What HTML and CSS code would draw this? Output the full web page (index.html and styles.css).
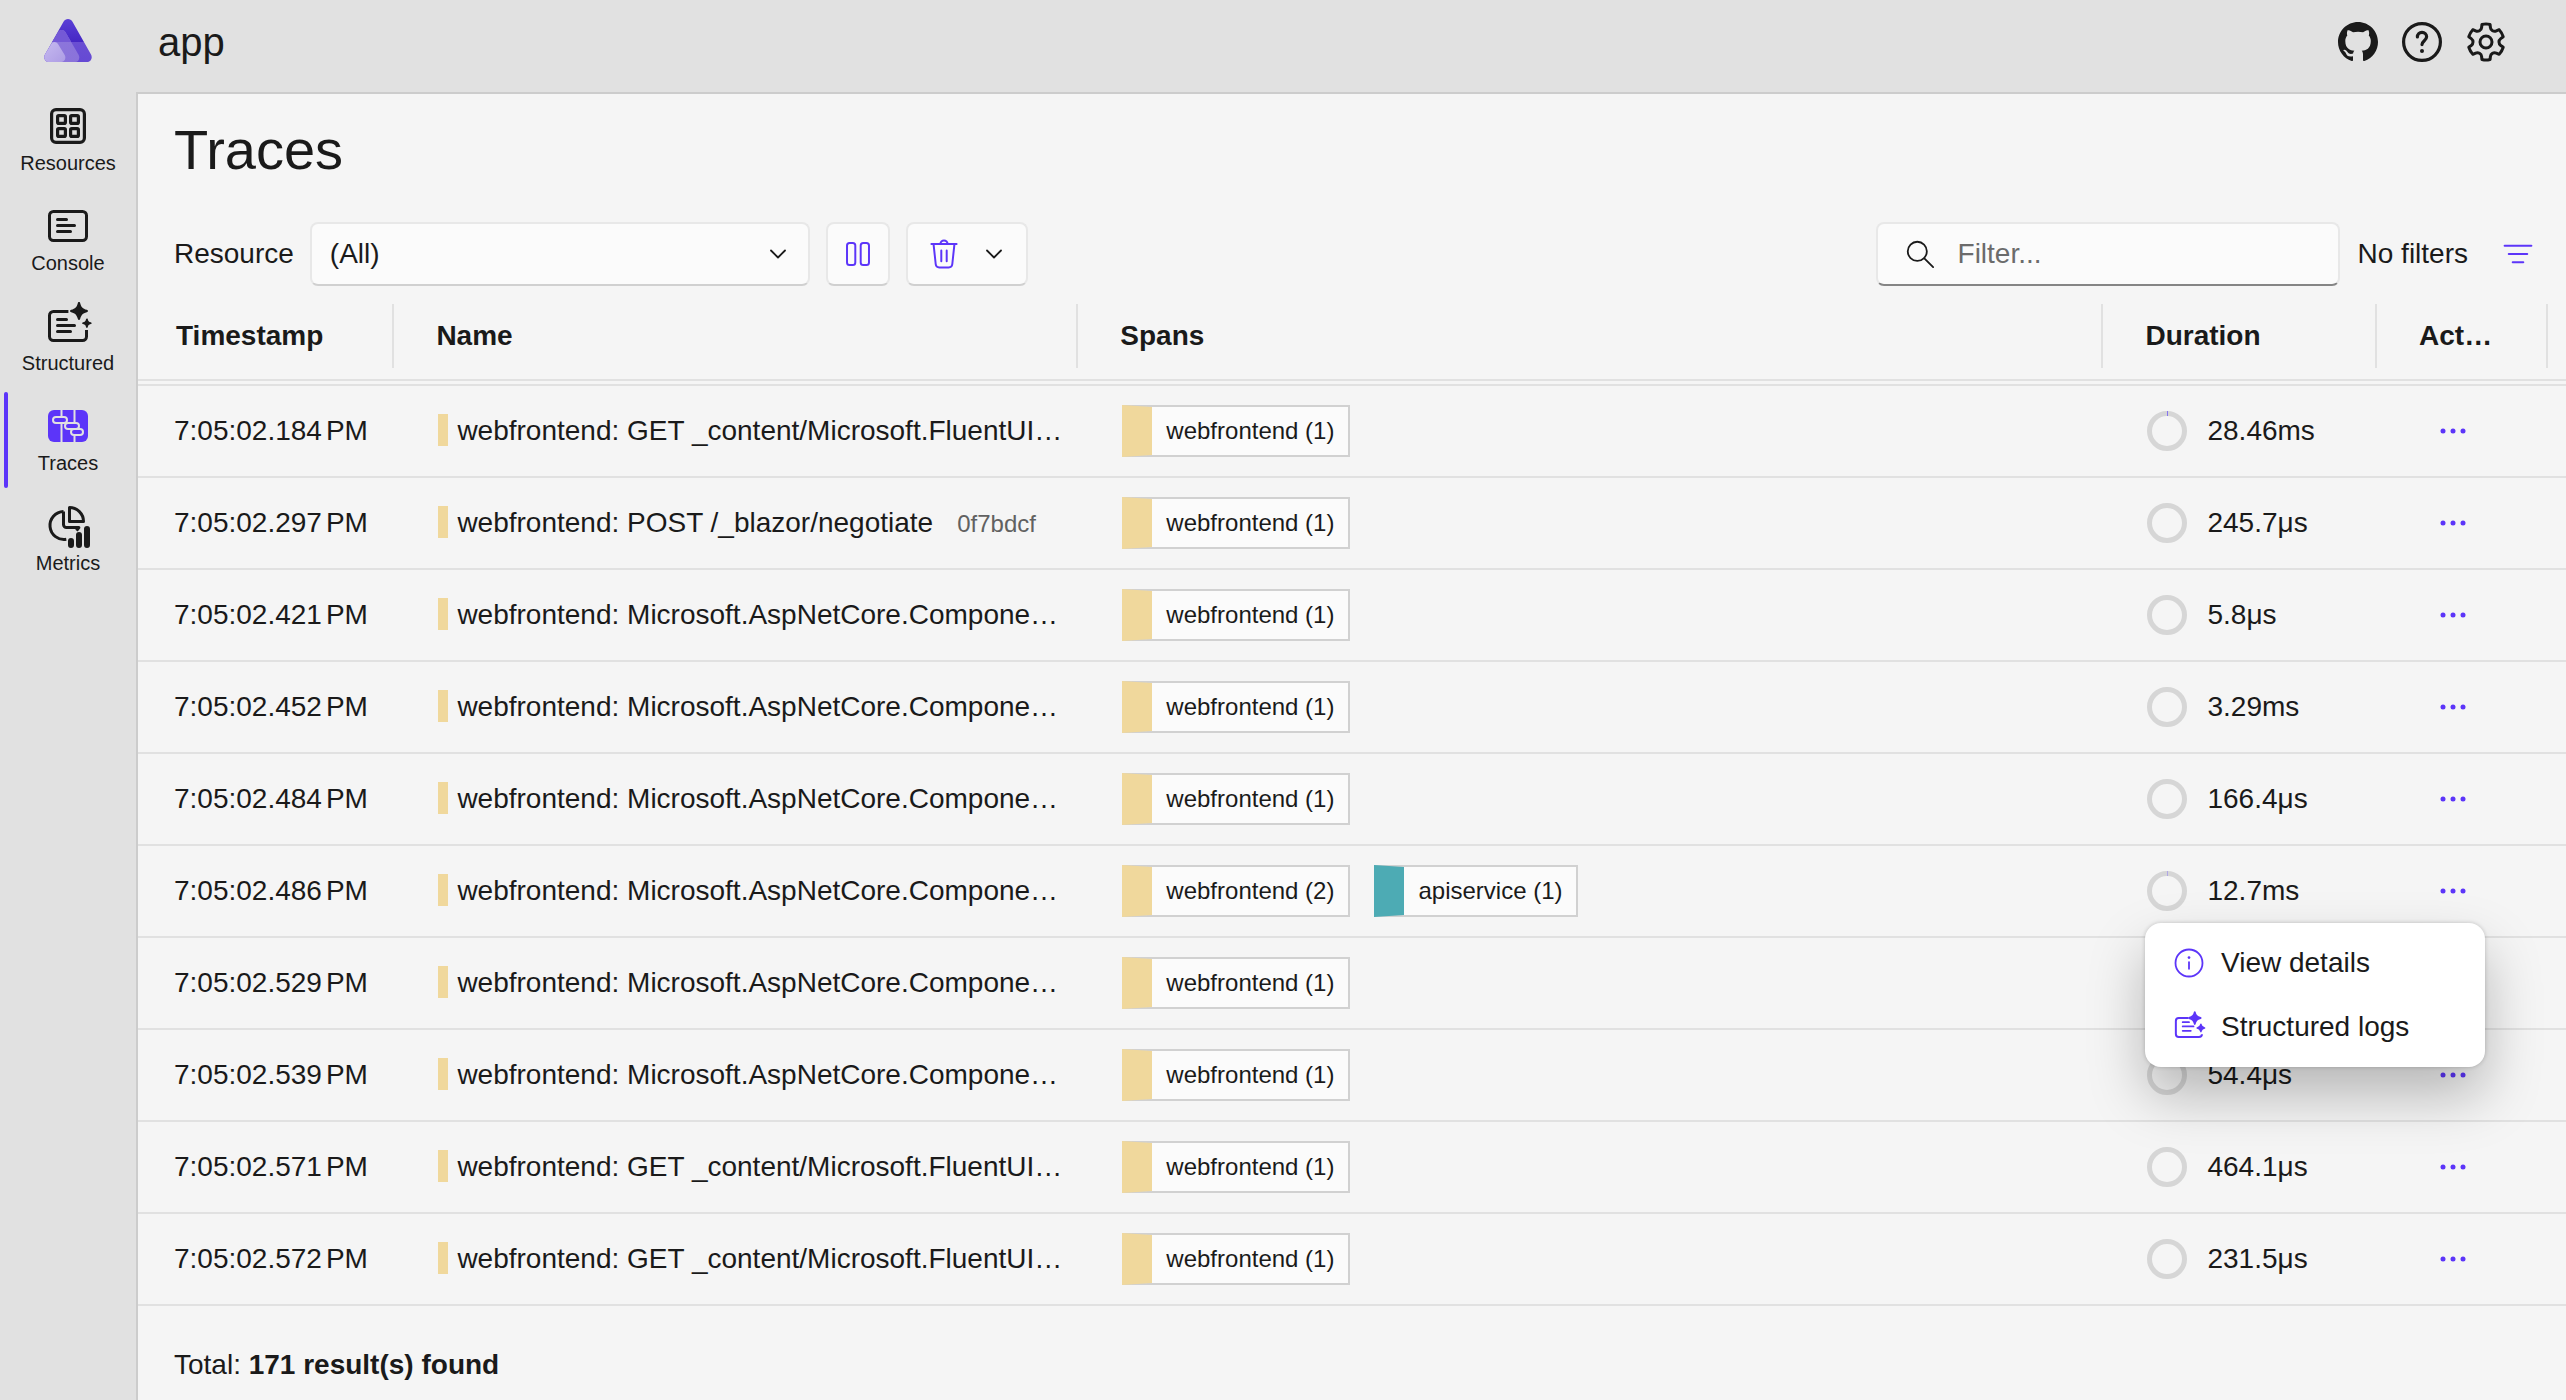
FILE: index.html
```html
<!DOCTYPE html>
<html lang="en">
<head>
<meta charset="utf-8">
<title>app traces</title>
<link rel="stylesheet" href="styles.css">
</head>
<body>
<svg class="sprite" aria-hidden="true">
  <symbol id="resources" viewBox="0 0 24 24"><g fill="none" stroke="currentColor" stroke-width="1.6"><rect x="3.8" y="3.8" width="16.4" height="16.4" rx="2.2"/><rect x="6.800" y="6.800" width="3.900" height="3.900" rx=".6"/><rect x="13.300" y="6.800" width="3.900" height="3.900" rx=".6"/><rect x="6.800" y="13.300" width="3.900" height="3.900" rx=".6"/><rect x="13.300" y="13.300" width="3.900" height="3.900" rx=".6"/></g></symbol>
  <symbol id="console" viewBox="0 0 24 24"><g fill="none" stroke="currentColor" stroke-width="1.5" stroke-linecap="round"><rect x="2.75" y="4.75" width="18.5" height="14.5" rx="2"/><path d="M6.75 8.75h4.5M6.75 11.75h8.5M6.75 14.75h6.5"/></g></symbol>
  <symbol id="structured" viewBox="0 0 24 24"><path fill="none" stroke="currentColor" stroke-width="1.5" stroke-linecap="round" d="M6.75 8.75h4.5M6.75 11.75h8.5M6.75 14.75h6.5"/><path fill="none" stroke="currentColor" stroke-width="1.5" d="M12.2 4.75H4.75a2 2 0 0 0-2 2v10.5c0 1.1.9 2 2 2h14.5a2 2 0 0 0 2-2V14"/><path fill="currentColor" d="M17.5 0c.4 0 .5.3.6.6.5 1.9 1.2 2.7 3.3 3.3.8.2.8 1 0 1.2-2.1.6-2.8 1.4-3.3 3.3-.2.8-1 .8-1.2 0-.5-1.9-1.2-2.7-3.3-3.3-.8-.2-.8-1 0-1.2 2.1-.6 2.8-1.4 3.3-3.3.1-.3.2-.6.6-.6ZM21.5 8.200c.3 0 .4.2.4.4.2 1 .5 1.300 1.500 1.500.6.2.6.8 0 .9-1 .3-1.300.6-1.500 1.500-.2.6-.7.6-.9 0-.2-.9-.5-1.200-1.500-1.500-.6-.1-.6-.7 0-.9 1-.2 1.300-.5 1.500-1.500.1-.2.2-.4.5-.4Z"/></symbol>
  <symbol id="logs" viewBox="0 0 20 20"><path fill="none" stroke="currentColor" stroke-linecap="round" d="M6.500 7.300h3.500M6.500 9.700h6M6.500 12.100h4.500"/><path fill="none" stroke="currentColor" stroke-width="1.100" d="M9.500 5H4.300A1.600 1.600 0 0 0 2.700 6.600v7.300c0 .9.700 1.600 1.600 1.600h11.200c1 0 1.700-.7 1.700-1.500"/><path fill="currentColor" d="M13.200 1.200c.3 0 .4.2.5.5.4 1.600 1 2.300 2.800 2.800.7.200.7.900 0 1.100-1.800.5-2.400 1.200-2.800 2.800-.2.700-.8.700-1 0-.4-1.600-1-2.300-2.800-2.800-.7-.2-.7-.9 0-1.100 1.800-.5 2.400-1.200 2.800-2.800.1-.3.200-.5.500-.5ZM16.600 8c.3 0 .3.200.4.400.3 1 .7 1.400 1.700 1.700.5.200.5.700 0 .9-1 .3-1.400.7-1.700 1.700-.1.500-.6.500-.8 0-.3-1-.7-1.400-1.700-1.700-.5-.2-.5-.7 0-.9 1-.3 1.400-.7 1.700-1.700.1-.2.200-.4.400-.4Z"/></symbol>
  <symbol id="traces" viewBox="0 0 24 24"><rect x="2" y="4" width="20" height="16" rx="3" fill="currentColor"/><g fill="none" stroke="#e1e1e1"><path d="M8.75 4v3.500M8.75 11v9M15.250 4v6.500M15.250 17v3"/><rect x="4.500" y="7.500" width="7" height="3" rx="1.500"/><rect x="10.500" y="10.500" width="7" height="3" rx="1.500"/><rect x="13.500" y="13.500" width="6" height="3" rx="1.500"/></g></symbol>
  <symbol id="metrics" viewBox="0 0 24 24"><g fill="none" stroke="currentColor" stroke-width="1.5" stroke-linejoin="round"><path d="M12.75 2.75v7h7a7 7 0 0 0-7-7Z"/><path d="M9.75 4.75a7 7 0 1 0 1.400 13.900M9.75 4.75v6.500a1.500 1.500 0 0 0 1.500 1.500h6.200l-1.200 1.600"/></g><g stroke="currentColor" stroke-width="3" stroke-linecap="round"><path d="M13.500 19.500v2M17.500 16.500v5M21.500 13.500v8"/></g></symbol>
  <symbol id="github" viewBox="0 0 16 16"><path fill="currentColor" d="M8 0C3.580 0 0 3.580 0 8c0 3.540 2.290 6.530 5.470 7.590.4.070.55-.17.55-.38 0-.19-.01-.82-.01-1.490-2.010.37-2.530-.49-2.690-.94-.09-.23-.48-.94-.82-1.130-.28-.15-.68-.52-.01-.53.63-.01 1.080.58 1.230.82.72 1.210 1.870.87 2.330.66.07-.52.28-.87.51-1.070-1.780-.2-3.640-.89-3.640-3.950 0-.87.31-1.590.82-2.150-.08-.2-.36-1.020.08-2.120 0 0 .67-.21 2.200.82.64-.18 1.320-.27 2-.27s1.360.09 2 .27c1.530-1.040 2.200-.82 2.200-.82.44 1.100.16 1.920.08 2.120.51.56.82 1.270.82 2.150 0 3.070-1.870 3.750-3.650 3.950.29.25.54.73.54 1.480 0 1.070-.01 1.930-.01 2.200 0 .21.15.46.55.38A8.010 8.010 0 0 0 16 8c0-4.420-3.580-8-8-8Z"/></symbol>
  <symbol id="help" viewBox="0 0 24 24"><g fill="none" stroke="currentColor" stroke-width="1.6" stroke-linecap="round"><circle cx="12" cy="12" r="9.200"/><path d="M9.700 9.500c0-1.400 1-2.300 2.300-2.300s2.300.9 2.300 2.200c0 1.900-2.300 2-2.300 3.900"/></g><circle cx="12" cy="16.500" r="1" fill="currentColor"/></symbol>
  <symbol id="settings" viewBox="0 0 24 24"><path fill="currentColor" fill-rule="evenodd" d="M12.010 2.250c.74 0 1.470.1 2.180.25.32.07.55.33.59.65l.17 1.530a1.380 1.380 0 0 0 1.920 1.110l1.400-.61c.3-.13.64-.06.85.17a9.790 9.790 0 0 1 2.200 3.800c.1.3 0 .63-.26.82l-1.250.92a1.380 1.380 0 0 0 0 2.220l1.250.92c.26.19.36.52.27.82a9.800 9.800 0 0 1-2.200 3.800.75.75 0 0 1-.85.17l-1.400-.62a1.380 1.380 0 0 0-1.930 1.120l-.17 1.520a.75.75 0 0 1-.58.65 9.520 9.520 0 0 1-4.400 0 .75.75 0 0 1-.57-.65l-.17-1.520a1.380 1.380 0 0 0-1.930-1.110l-1.400.62a.75.75 0 0 1-.85-.18 9.800 9.800 0 0 1-2.200-3.800c-.1-.3 0-.63.27-.82l1.240-.92a1.380 1.380 0 0 0 0-2.220l-1.240-.92a.75.75 0 0 1-.28-.82 9.800 9.800 0 0 1 2.200-3.800c.23-.23.57-.3.86-.17l1.400.62c.4.17.86.15 1.250-.08.38-.22.63-.6.68-1.040l.17-1.530a.75.75 0 0 1 .58-.65c.72-.16 1.450-.24 2.200-.25Zm0 1.500c-.45 0-.9.04-1.350.12l-.11.97a2.890 2.890 0 0 1-4.030 2.330l-.9-.4A8.300 8.300 0 0 0 4.280 9.100l.8.59a2.880 2.880 0 0 1 0 4.640l-.8.59a8.300 8.300 0 0 0 1.350 2.320l.9-.4a2.880 2.880 0 0 1 4.020 2.330l.1.99c.9.15 1.800.15 2.700 0l.1-.99a2.880 2.880 0 0 1 4.020-2.320l.9.4a8.300 8.300 0 0 0 1.350-2.330l-.8-.59a2.880 2.880 0 0 1 0-4.640l.8-.59a8.300 8.300 0 0 0-1.360-2.330l-.89.4a2.880 2.880 0 0 1-4.020-2.320l-.11-.98c-.45-.08-.9-.12-1.340-.12ZM12 8.250a3.750 3.750 0 1 1 0 7.500 3.750 3.750 0 0 1 0-7.500Zm0 1.500a2.250 2.250 0 1 0 0 4.500 2.250 2.250 0 0 0 0-4.500Z"/></symbol>
  <symbol id="chevron" viewBox="0 0 24 24"><path fill="none" stroke="currentColor" stroke-width="1.800" stroke-linecap="round" stroke-linejoin="round" d="m5 8.500 7 7 7-7"/></symbol>
  <symbol id="pause" viewBox="0 0 20 20"><g fill="none" stroke="currentColor" stroke-width="1.100"><rect x="3.900" y="3.900" width="4.600" height="12.200" rx="1.400"/><rect x="11.500" y="3.900" width="4.600" height="12.200" rx="1.400"/></g></symbol>
  <symbol id="trash" viewBox="0 0 20 20"><path fill="none" stroke="currentColor" stroke-width="1.100" stroke-linecap="round" d="M3 4.500h14M8 4.500a2 2 0 0 1 4 0M4.200 4.500l1.200 11.200a2 2 0 0 0 2 1.800h5.200a2 2 0 0 0 2-1.800l1.200-11.200M8.500 8v6M11.500 8v6"/></symbol>
  <symbol id="search" viewBox="0 0 20 20"><g fill="none" stroke="currentColor" stroke-linecap="round"><circle cx="8.500" cy="8.500" r="5.300"/><path d="m12.400 12.400 4.900 4.900"/></g></symbol>
  <symbol id="filter" viewBox="0 0 20 20"><path stroke="currentColor" stroke-width="1.200" stroke-linecap="round" d="M2.600 5.400h14.800M4.900 10h10.200M7.100 14.600h5.800"/></symbol>
  <symbol id="info" viewBox="0 0 20 20"><circle cx="10" cy="10" r="7.500" fill="none" stroke="currentColor"/><path stroke="currentColor" stroke-linecap="round" d="M10 9.500v3.700"/><circle cx="10" cy="7" r=".75" fill="currentColor"/></symbol>
  <symbol id="more" viewBox="0 0 32 32"><g fill="currentColor"><circle cx="6" cy="16" r="2.500"/><circle cx="16" cy="16" r="2.500"/><circle cx="26" cy="16" r="2.500"/></g></symbol>
  <symbol id="ring" viewBox="0 0 40 40"><circle cx="20" cy="20" r="17.500" fill="none" stroke="#d6d6d6" stroke-width="5"/></symbol>
</svg>

<aside class="side">
  <a class="logo" href="#" aria-label="Home">
    <svg viewBox="0 0 48 43"><defs>
      <linearGradient id="g1" x1="0" y1="0" x2="0" y2="1"><stop offset="0" stop-color="#5a3fd6"/><stop offset=".53" stop-color="#4527c4"/><stop offset=".54" stop-color="#6a4fd2"/><stop offset="1" stop-color="#6549d4"/></linearGradient>
      <linearGradient id="g2" x1="0" y1="0" x2="1" y2="1"><stop offset="0" stop-color="#8d78dc"/><stop offset="1" stop-color="#8a72da"/></linearGradient>
      <linearGradient id="g3" x1="0" y1="0" x2="1" y2="1"><stop offset="0" stop-color="#c6baf0"/><stop offset="1" stop-color="#ad9ce4"/></linearGradient></defs>
      <path fill="url(#g1)" d="M19.500 2.800c2-3.600 7-3.600 9 0L47 35.500c2 3.700-.5 7.500-4 7.500H5c-3.500 0-6-3.800-4-7.500Z"/>
      <path fill="url(#g2)" d="M15 12c2-1.700 5-1.200 6.500 1.200L34.700 36c1.500 3 0 7-3.700 7H5c-3.500 0-6-3.800-4-7.500Z"/>
      <path fill="#7459d6" d="M15 12c2-1.700 5-1.200 6.500 1.200L27.200 23H8.100Z"/>
      <path fill="url(#g3)" d="M8 23.800c2-1.400 4.800-.8 6 1.300l6.700 10.900c1.700 3 0 7-3.200 7H5c-3.500 0-6-3.800-4-7.500Z"/>
    </svg>
  </a>
  <nav class="nav">
    <a href="#"><svg><use href="#resources"/></svg>Resources</a>
    <a href="#"><svg><use href="#console"/></svg>Console</a>
    <a href="#"><svg><use href="#structured"/></svg>Structured</a>
    <a href="#" class="active" aria-current="page"><svg><use href="#traces"/></svg>Traces</a>
    <a href="#"><svg><use href="#metrics"/></svg>Metrics</a>
  </nav>
</aside>

<div class="page">
  <header class="top">
    <span class="app-name">app</span>
    <div class="top-links">
      <a href="#" aria-label="GitHub"><svg class="mark"><use href="#github"/></svg></a>
      <button type="button" aria-label="Help"><svg><use href="#help"/></svg></button>
      <button type="button" aria-label="Settings"><svg><use href="#settings"/></svg></button>
    </div>
  </header>
  <main class="main">
    <h1>Traces</h1>
    <div class="toolbar">
      <label for="resource">Resource</label>
      <div class="select-wrap">
        <select id="resource"><option>(All)</option></select>
        <svg class="chev"><use href="#chevron"/></svg>
      </div>
      <button type="button" class="box" aria-label="Pause"><svg><use href="#pause"/></svg></button>
      <button type="button" class="box clear" aria-label="Clear"><svg><use href="#trash"/></svg><svg class="chev"><use href="#chevron"/></svg></button>
      <div class="filters">
        <div class="search">
          <svg><use href="#search"/></svg>
          <input type="text" placeholder="Filter..." aria-label="Filter">
        </div>
        <span>No filters</span>
        <button type="button" class="plain" aria-label="Add filter"><svg><use href="#filter"/></svg></button>
      </div>
    </div>
    <table class="grid">
      <colgroup><col class="c-time"><col class="c-name"><col><col class="c-dur"><col class="c-act"><col class="c-end"></colgroup>
      <thead><tr><th scope="col"><div>Timestamp</div></th><th scope="col"><div>Name</div></th><th scope="col"><div>Spans</div></th><th scope="col"><div>Duration</div></th><th scope="col"><div>Actions</div></th><td></td></tr></thead>
      <tbody id="rows"></tbody>
    </table>
    <footer class="total">Total: <b>171 result(s) found</b></footer>
  </main>
</div>
<script src="rows.js"></script>
</body>
</html>
```
FILE: rows.js
```js
const content = "GET _content/Microsoft.FluentUI.AspNetCore";
const component = "Microsoft.AspNetCore.Components";
const traces = [
  { time: "184", name: content, duration: "28.46ms", tick: "#8674f0" },
  { time: "297", name: "POST /_blazor/negotiate", id: "0f7bdcf", duration: "245.7μs" },
  { time: "421", name: component, duration: "5.8μs" },
  { time: "452", name: component, duration: "3.29ms" },
  { time: "484", name: component, duration: "166.4μs" },
  { time: "486", name: component, duration: "12.7ms", front: 2, api: 1, tick: "#b0a6e6", menu: true },
  { time: "529", name: component, duration: "" },
  { time: "539", name: component, duration: "54.4μs" },
  { time: "571", name: content, duration: "464.1μs" },
  { time: "572", name: content, duration: "231.5μs" },
];
const menu = `<div class="menu" role="menu">
  <button type="button" role="menuitem"><svg><use href="#info"/></svg>View details</button>
  <button type="button" role="menuitem"><svg><use href="#logs"/></svg>Structured logs</button>
</div>`;
document.getElementById("rows").innerHTML = traces.map(t => `<tr>
  <td>7:05:02.${t.time}<span class="pm">PM</span></td>
  <td><div class="name"><i></i>webfrontend: ${t.name}${t.id ? `<small>${t.id}</small>` : ""}</div></td>
  <td><div class="chips"><span class="chip">webfrontend (${t.front || 1})</span>${t.api ? `<span class="chip api">apiservice (${t.api})</span>` : ""}</div></td>
  <td><div class="dur"><svg><use href="#ring"/>${t.tick ? `<path stroke="${t.tick}" d="M20.5 0v5"/>` : ""}</svg>${t.duration}</div></td>
  <td class="act"><button type="button" aria-label="Actions"><svg><use href="#more"/></svg></button>${t.menu ? menu : ""}</td>
  <td></td></tr>`).join("");
```
FILE: styles.css
```css
* { box-sizing: border-box; }
body {
  margin: 0;
  display: grid;
  grid-template-columns: 136px 1fr;
  min-height: 100vh;
  background: #e1e1e1;
  color: #1a1a1a;
  font: 28px/36px "Liberation Sans", Arial, sans-serif;
}
.sprite { display: none; }
svg { display: block; flex: none; width: 36px; height: 36px; }
a { color: inherit; text-decoration: none; }
button { border: 0; padding: 0; background: none; color: inherit; font: inherit; cursor: pointer; }

.logo { display: flex; justify-content: center; height: 90px; padding-top: 19px; }
.logo svg { width: 48px; height: 43px; }
.nav a {
  position: relative;
  display: flex;
  flex-direction: column;
  align-items: center;
  height: 100px;
  padding-top: 12px;
  font-size: 20px;
  line-height: 26px;
}
.nav svg { width: 48px; height: 48px; }
.nav .active svg { color: #5c35f9; }
.nav .active::before {
  content: "";
  position: absolute;
  left: 4px;
  top: 2px;
  width: 4px;
  height: 96px;
  border-radius: 2px;
  background: #5c35f9;
}

.page { display: flex; flex-direction: column; min-width: 0; }
.top {
  display: flex;
  align-items: center;
  justify-content: space-between;
  height: 92px;
  padding: 0 56px 8px 22px;
}
.app-name { font-size: 40px; line-height: 48px; }
.top-links { display: flex; gap: 16px; }
.top-links a { display: grid; place-items: center; width: 48px; height: 48px; }
.top-links svg { width: 48px; height: 48px; }
.top-links .mark { width: 40px; height: 40px; }

.main {
  flex: 1;
  padding-top: 20px;
  border: solid #ccc;
  border-width: 2px 0 0 2px;
  background: #f5f5f5;
}
h1 { margin: 0 36px 36px; font-size: 56px; font-weight: 400; line-height: 72px; }
.toolbar { display: flex; align-items: center; gap: 16px; padding: 0 16px 0 36px; }
.filters { display: flex; align-items: center; gap: 18px; margin-left: auto; }
.select-wrap { position: relative; width: 500px; }
select, .box, .search {
  height: 64px;
  border: 2px solid #e8e8e8;
  border-bottom-color: #d0d0d0;
  border-radius: 8px;
  background: #fbfbfb;
}
select {
  display: block;
  width: 100%;
  padding: 0 18px;
  appearance: none;
  color: inherit;
  font: inherit;
}
.chev { width: 24px; height: 24px; color: #1a1a1a; }
.select-wrap .chev { position: absolute; right: 20px; top: 20px; pointer-events: none; }
.box { display: flex; align-items: center; justify-content: center; width: 64px; color: #5c35f9; }
.clear { width: 122px; gap: 20px; padding-right: 2px; }
.search {
  display: flex;
  align-items: center;
  gap: 20px;
  width: 464px;
  padding: 0 24px;
  border-bottom-color: #858585;
}
.search input {
  flex: 1;
  min-width: 0;
  padding: 0;
  border: 0;
  outline: 0;
  background: none;
  font: inherit;
}
.search input::placeholder { color: #6b6b6b; opacity: 1; }
.plain { display: grid; place-items: center; width: 64px; height: 64px; color: #5c35f9; }

.grid { width: 100%; margin-top: 4px; table-layout: fixed; border-spacing: 0; }
.c-time { width: 10.56%; }
.c-name { width: 28.17%; }
.c-dur { width: 11.27%; }
.c-act { width: 7.04%; }
.c-end { width: 18px; }
th, td { padding: 0; text-align: left; }
thead th, thead td {
  height: 96px;
  padding-top: 14px;
  border-bottom: 7px double #e1e1e1;
  vertical-align: top;
}
th div {
  height: 64px;
  padding: 0 50px 0 42px;
  border-right: 2px solid #e1e1e1;
  line-height: 64px;
  overflow: hidden;
  text-overflow: ellipsis;
  white-space: nowrap;
}
th:first-child div { padding-left: 38px; }
tbody td { height: 92px; padding-left: 44px; border-bottom: 2px solid #e1e1e1; white-space: nowrap; }
tbody td:first-child { padding-left: 36px; }
tbody td:last-child { padding: 0; }
.pm { margin-left: 4px; }
.name { margin-right: 12px; overflow: hidden; text-overflow: ellipsis; }
.name i {
  display: inline-block;
  width: 10px;
  height: 32px;
  margin-right: 9px;
  background: #f0d89c;
  vertical-align: -6px;
}
.name small { margin-left: 24px; color: #616161; font-size: 24px; }
.chips { display: flex; gap: 24px; }
.chip {
  height: 52px;
  padding: 0 14px;
  border: 2px solid #d1d1d1;
  border-left: 30px solid #f0d89c;
  background: #fbfbfb;
  font-size: 24px;
  line-height: 48px;
}
.api { border-left-color: #4dabb4; }
.dur { display: flex; align-items: center; gap: 20px; }
.dur svg { width: 40px; height: 40px; }
tbody .act { position: relative; padding-left: 60px; }
.act > button { display: grid; place-items: center; width: 32px; height: 64px; color: #5c35f9; }
.act > button svg { width: 32px; height: 32px; }
.menu {
  position: absolute;
  z-index: 1;
  right: 63px;
  top: 77px;
  width: 340px;
  padding: 8px;
  border-radius: 16px;
  background: #fff;
  box-shadow: 0 0 4px rgba(0, 0, 0, .2), 0 28px 56px rgba(0, 0, 0, .26);
}
.menu button { display: flex; align-items: center; gap: 14px; width: 100%; height: 64px; padding: 0 18px; }
.menu svg { color: #5c35f9; }
.total { padding: 41px 36px 8px; }
```
